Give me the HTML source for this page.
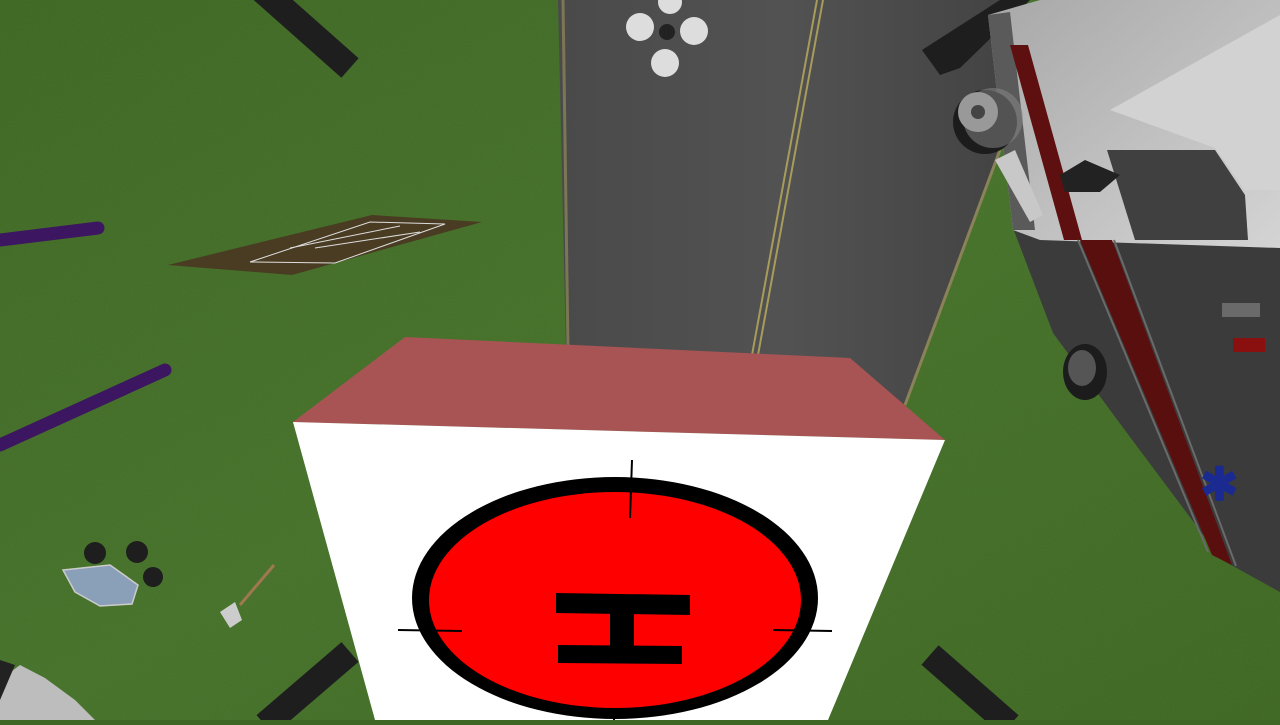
<!DOCTYPE html>
<html><head><meta charset="utf-8"><style>html,body{margin:0;padding:0;overflow:hidden;background:#3e6624}</style></head>
<body>
<svg width="1280" height="720" viewBox="0 0 1280 720" xmlns="http://www.w3.org/2000/svg">
<defs>
<linearGradient id="g" x1="0" y1="0" x2="1" y2="1"><stop offset="0" stop-color="#3c6522"/><stop offset="0.5" stop-color="#44702a"/><stop offset="1" stop-color="#3c6521"/></linearGradient>
<linearGradient id="rd" x1="0" y1="0" x2="1" y2="0"><stop offset="0" stop-color="#4a4a4a"/><stop offset="0.5" stop-color="#525252"/><stop offset="1" stop-color="#434343"/></linearGradient>
<linearGradient id="cab" x1="0" y1="0" x2="1" y2="1"><stop offset="0" stop-color="#a8a8a8"/><stop offset="1" stop-color="#d4d4d4"/></linearGradient>
<filter id="n"><feTurbulence type="fractalNoise" baseFrequency="0.9" numOctaves="2"/><feColorMatrix values="0 0 0 0 0.2  0 0 0 0 0.35  0 0 0 0 0.1  0 0 0 0.35 0"/></filter>
</defs>
<rect width="1280" height="720" fill="url(#g)"/>
<rect width="1280" height="720" filter="url(#n)" opacity="0.5"/>
<!-- road -->
<polygon points="558,0 1010,0 1000,150 905,405 566,352" fill="url(#rd)"/>
<polyline points="563,0 568,350" stroke="#7b7654" stroke-width="3" fill="none"/>
<polyline points="817,0 752,355" stroke="#a89c5a" stroke-width="2" fill="none"/>
<polyline points="823,0 758,355" stroke="#a89c5a" stroke-width="2" fill="none"/>
<polyline points="1000,150 905,405" stroke="#8a8258" stroke-width="3" fill="none"/>
<!-- drone -->
<g fill="#ddd"><circle cx="640" cy="27" r="14"/><circle cx="694" cy="31" r="14"/><circle cx="665" cy="63" r="14"/><circle cx="670" cy="2" r="12"/></g>
<circle cx="667" cy="32" r="8" fill="#222"/>
<!-- dirt pad -->
<polygon points="168,265 372,215 482,222 292,275" fill="#4a3c22"/>
<polygon points="250,262 370,222 445,224 335,263" fill="none" stroke="#ddd" stroke-width="1"/>
<line x1="290" y1="248" x2="400" y2="226" stroke="#ddd"/><line x1="315" y1="248" x2="420" y2="232" stroke="#ddd"/>
<!-- black bars -->
<g stroke="#1e1e1e" stroke-width="26" stroke-linecap="butt">
<line x1="262" y1="-10" x2="350" y2="68"/>
<line x1="265" y1="725" x2="350" y2="652"/>
<line x1="930" y1="655" x2="1010" y2="725"/>
</g>
<!-- purple sticks -->
<g stroke="#3c1660" stroke-width="13" stroke-linecap="round">
<line x1="0" y1="240" x2="98" y2="228"/>
<line x1="0" y1="445" x2="165" y2="370"/>
</g>
<!-- ambulance -->
<polygon points="922,50 1000,0 1030,0 960,68 940,75" fill="#1e1e1e"/>
<polygon points="1013,228 1280,245 1280,592 1222,560 1127,433 1053,333" fill="#3b3b3b"/>
<polygon points="988,15 1040,0 1280,0 1280,248 1040,240 1013,230" fill="url(#cab)"/>
<polygon points="988,15 1010,12 1035,230 1013,230" fill="#5a5a5a"/>
<polygon points="1110,110 1280,15 1280,190 1245,190 1215,148" fill="#d2d2d2"/>
<polygon points="1107,150 1215,150 1245,195 1248,240 1135,240" fill="#404040"/>
<polygon points="1010,45 1028,45 1082,240 1064,240" fill="#5e1010"/>
<polygon points="1080,240 1112,240 1232,565 1212,555" fill="#5a0f0f"/>
<line x1="1078" y1="240" x2="1208" y2="552" stroke="#6a6a6a" stroke-width="2"/>
<line x1="1114" y1="240" x2="1236" y2="566" stroke="#6a6a6a" stroke-width="2"/>
<polygon points="1060,175 1085,160 1120,175 1100,192 1065,192" fill="#222"/>
<rect x="1222" y="303" width="38" height="14" fill="#6a6a6a"/>
<rect x="1233" y="338" width="32" height="14" fill="#8a1010"/>
<text x="1200" y="500" fill="#1a2a90" font-family="Liberation Sans,sans-serif" font-size="46" font-weight="bold">✱</text>
<polygon points="995,160 1015,150 1043,215 1030,222" fill="#c8c8c8"/>
<circle cx="985" cy="122" r="32" fill="#1c1c1c"/><circle cx="993" cy="118" r="30" fill="#8a8a8a" opacity="0.5"/><circle cx="978" cy="112" r="20" fill="#999"/><circle cx="978" cy="112" r="7" fill="#444"/>
<ellipse cx="1085" cy="372" rx="22" ry="28" fill="#1c1c1c"/><ellipse cx="1082" cy="368" rx="14" ry="18" fill="#555"/>
<!-- small props -->
<g fill="#1e1e1e"><circle cx="95" cy="553" r="11"/><circle cx="137" cy="552" r="11"/><circle cx="153" cy="577" r="10"/></g>
<polygon points="63,570 110,565 138,585 132,604 100,606 75,592" fill="#8aa0b8" stroke="#ccc" stroke-width="1.5"/>
<line x1="240" y1="605" x2="274" y2="565" stroke="#a07850" stroke-width="3"/>
<polygon points="220,612 235,602 242,620 230,628" fill="#cccccc"/>
<polygon points="0,680 20,665 45,678 75,700 95,720 0,720" fill="#bdbdbd"/>
<polygon points="0,660 15,665 0,700" fill="#222"/>
<!-- box -->
<polygon points="405,337 850,358 945,440 293,422" fill="#a85454"/>
<polygon points="293,422 945,440 828,720 375,720" fill="#ffffff"/>
<ellipse cx="615" cy="598" rx="203" ry="121" fill="#000"/>
<ellipse cx="615" cy="600" rx="186" ry="108" fill="#ff0000"/>
<g fill="#000">
<polygon points="556,593 690,595 690,615 556,613"/>
<polygon points="558,645 682,646 682,664 558,663"/>
<rect x="610" y="612" width="24" height="35"/>
</g>
<g stroke="#000" stroke-width="2">
<line x1="632" y1="460" x2="630" y2="518"/>
<line x1="398" y1="630" x2="462" y2="631"/>
<line x1="773" y1="630" x2="832" y2="631"/>
<line x1="614" y1="712" x2="614" y2="720"/>
</g>
</svg>
</body></html>
